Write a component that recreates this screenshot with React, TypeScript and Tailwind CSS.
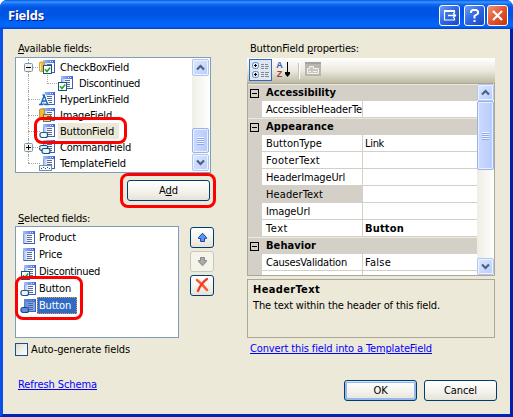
import React, { useLayoutEffect, useRef, useState } from "react";

/** Text whose tracking is adjusted so that it takes exactly `w` pixels. */
function Label({ w, children, className = "" }: { w: number; children: React.ReactNode; className?: string }) {
  const ref = useRef<HTMLSpanElement>(null);
  const [spacing, setSpacing] = useState(0);
  useLayoutEffect(() => {
    const el = ref.current;
    if (!el) return;
    const count = (el.textContent || "").length;
    el.style.letterSpacing = "0px";
    const next = (w - el.getBoundingClientRect().width) / count;
    el.style.letterSpacing = `${next}px`;
    setSpacing(next);
  }, [w]);
  return (
    <span ref={ref} className={`inline-block shrink-0 whitespace-pre ${className}`} style={{ letterSpacing: spacing }}>
      {children}
    </span>
  );
}

type Badge = "none" | "check" | "link" | "image" | "button" | "command" | "template" | "dbcheck";

/** White box with a green tick, as wide as 8 pixels. */
function Tick({ x, y }: { x: number; y: number }) {
  return (
    <g transform={`translate(${x} ${y})`}>
      <rect x=".5" y=".5" width="8" height="8" fill="#fff" stroke="#1c5180" />
      <path d="M2 4.200l2 2.300 3.200-4" fill="none" stroke="#21a121" strokeWidth="1.500" />
    </g>
  );
}

function FieldIcon({ badge = "none", selected = false }: { badge?: Badge; selected?: boolean }) {
  return (
    <svg width="16" height="16" viewBox="0 0 16 16" className="shrink-0">
      <defs>
        <linearGradient id="page" x1="0" y1="0" x2="1" y2="0">
          <stop offset="0" stopColor="#a9c0f5" />
          <stop offset=".4" stopColor="#f4f7ff" />
          <stop offset="1" stopColor="#ffffff" />
        </linearGradient>
        <linearGradient id="bar" x1="0" y1="0" x2="1" y2="0">
          <stop offset="0" stopColor="#a9c1fb" />
          <stop offset="1" stopColor="#3c62d8" />
        </linearGradient>
      </defs>
      <rect x="4" y="1" width="12" height="13" fill="#7f9be2" />
      <rect x="5" y="4" width="10" height="9" fill="url(#page)" />
      <rect x="4" y="1" width="12" height="3" fill="url(#bar)" />
      <path d="M15.500 2v12M5 13.500h11" stroke="#3f5fb8" fill="none" />
      <path d="M11 2.500h1M13 2.500h1" stroke="#dfe8ff" />
      <path d="M8 5.500h5M8 7.500h5M8 9.500h5M8 11.500h5" stroke="#5d6c95" />
      {badge === "dbcheck" && (
        <g>
          <path d="M.5 3.500q2.500-1.500 5 0v8.500q-2.500 1.500-5 0z" fill="#f0bb2f" stroke="#b8861a" strokeWidth=".6" />
          <path d="M1.500 4.500v7" stroke="#ffe9a0" />
          <Tick x={4} y={6} />
        </g>
      )}
      {badge === "check" && <Tick x={1} y={7} />}
      {badge === "link" && (
        <g fill="none">
          <path d="M2 13L5 4L9 13M3.500 10h4" stroke="#fff" strokeWidth="3" />
          <path d="M2 13L5.200 4.500L8.500 13M3.500 10h4M0 13.500h4M6 13.500h4M3.500 4h2" stroke="#1769bd" strokeWidth="1.400" />
        </g>
      )}
      {badge === "image" && (
        <g>
          <path d="M.5 2.500q3-2 5 0v8h-5z" fill="#f0bb2f" stroke="#9f7926" strokeWidth=".7" />
          <rect x="4.500" y="7.500" width="7" height="7" fill="#d9cf92" stroke="#77703d" />
          <path d="M6 10h2v3H6z" fill="#b7402a" />
          <path d="M8 9h3v4H8z" fill="#387f45" />
        </g>
      )}
      {badge === "button" && (
        <rect x="1" y="9.500" width="7.500" height="5" rx="2" fill={selected ? "#668ed2" : "#eff5fa"} stroke={selected ? "#1f468c" : "#24537e"} strokeWidth="1.200" />
      )}
      {badge === "command" && (
        <g fill="#e4f2fa" stroke="#174d78" strokeWidth="1.200">
          <rect x=".6" y="6.500" width="8" height="5" rx="2" />
          <rect x="3" y="9.500" width="8" height="5" rx="2" />
        </g>
      )}
      {badge === "template" && (
        <g>
          <rect x=".5" y="10.500" width="12" height="5" fill="#f4f8fc" stroke="#7591aa" />
          <path d="M2 13.500h1M4 12.500h1M6 13.500h1M8 12.500h1M10 13.500h1" stroke="#35536e" />
        </g>
      )}
      {selected && <path d="M4 1h12v13H8.500V9H4z" fill="#316ac5" opacity=".6" />}
    </svg>
  );
}

function Chevron({ up = false }: { up?: boolean }) {
  return (
    <div className="flex h-[17px] w-full shrink-0 items-center justify-center rounded-[2px] border border-[#b3c6f1] bg-linear-to-br from-[#dce7ff] to-[#b9cdfb] shadow-[inset_0_0_0_1px_#edf3ff]">
      <svg width="9" height="7" viewBox="0 0 9 7">
        <path d={up ? "M1 5.500L4.500 2L8 5.500" : "M1 1.500L4.500 5L8 1.500"} fill="none" stroke="#4d6185" strokeWidth="2.200" />
      </svg>
    </div>
  );
}

function Thumb({ className }: { className: string }) {
  return (
    <div className={`flex w-full shrink-0 flex-col items-center justify-center gap-px rounded-[2px] border border-[#98b2eb] bg-linear-to-r from-[#cbdaff] to-[#b8cbfa] shadow-[inset_0_0_0_1px_#e8efff] ${className}`}>
      {[0, 1, 2, 3].map((i) => (
        <span key={i} className="h-px w-[7px] bg-[#eef4ff] shadow-[0_1px_0_#8caaf0]" />
      ))}
    </div>
  );
}

function Expander({ open }: { open: boolean }) {
  return (
    <svg width="9" height="9" className="relative shrink-0">
      <rect x=".5" y=".5" width="8" height="8" rx="1" fill="#f3f1e9" stroke="#7898b5" />
      <path d={open ? "M2 4.500h5" : "M2 4.500h5M4.500 2v5"} stroke="#000" />
    </svg>
  );
}

const tree: { text: string; w: number; badge: Badge; child?: boolean; box?: "open" | "closed"; hot?: boolean }[] = [
  { text: "CheckBoxField", w: 69, badge: "dbcheck", box: "open" },
  { text: "Discontinued", w: 61, badge: "check", child: true },
  { text: "HyperLinkField", w: 69, badge: "link" },
  { text: "ImageField", w: 52, badge: "image" },
  { text: "ButtonField", w: 54, badge: "button", hot: true },
  { text: "CommandField", w: 71, badge: "command", box: "closed" },
  { text: "TemplateField", w: 66, badge: "template" },
];

function TreeRow({ item, last }: { item: (typeof tree)[number]; last: boolean }) {
  return (
    <div className="flex h-4 items-center">
      <div className="relative flex h-4 w-[22px] items-center pl-[7px]">
        <span className={`absolute left-[11px] top-0 border-l border-dotted border-[#a9a799] ${last ? "h-2" : "h-4"}`} />
        {!item.child && <span className="absolute left-[11px] top-2 w-3 border-t border-dotted border-[#a9a799]" />}
        {item.box && <Expander open={item.box === "open"} />}
      </div>
      {item.child && (
        <div className="flex h-4 w-[18px] pl-2">
          <span className="h-[9px] w-[10px] border-b border-l border-dotted border-[#a9a799]" />
        </div>
      )}
      <FieldIcon badge={item.badge} />
      <div className={`flex h-4 items-center ${item.child ? "ml-[3px] pl-[3px]" : "ml-[3px] pl-[2px]"} ${item.hot ? "w-[61px] bg-[#ece9d8]" : ""}`}>
        <Label w={item.w} className="pt-px">{item.text}</Label>
      </div>
    </div>
  );
}

const selectedFields: { text: string; w: number; badge: Badge; sel?: boolean }[] = [
  { text: "Product", w: 37, badge: "none" },
  { text: "Price", w: 23, badge: "none" },
  { text: "Discontinued", w: 61, badge: "check" },
  { text: "Button", w: 32, badge: "button" },
  { text: "Button", w: 32, badge: "button", sel: true },
];

function PushButton({ children, focus = false, disabled = false, className }: { children: React.ReactNode; focus?: boolean; disabled?: boolean; className: string }) {
  return (
    <button
      className={`flex shrink-0 items-center justify-center rounded-[3px] border ${disabled ? "border-[#c9c7ba] bg-[#f5f4ea]" : "border-[#003c74] bg-linear-to-b from-white via-[#f5f4ee] to-[#e5e2d8]"} ${focus ? "shadow-[inset_0_1px_0_#cee7ff,inset_0_0_0_2px_#9ab7ec,inset_0_-2px_0_#7597df]" : ""} ${className}`}
    >
      {children}
    </button>
  );
}

const props: { name: string; nw: number; value?: string; vw?: number; kind?: "cat" | "active"; bold?: boolean }[] = [
  { name: "Accessibility", nw: 70, kind: "cat" },
  { name: "AccessibleHeaderTe", nw: 96 },
  { name: "Appearance", nw: 68, kind: "cat" },
  { name: "ButtonType", nw: 56, value: "Link", vw: 19 },
  { name: "FooterText", nw: 54 },
  { name: "HeaderImageUrl", nw: 79 },
  { name: "HeaderText", nw: 57, kind: "active" },
  { name: "ImageUrl", nw: 44 },
  { name: "Text", nw: 22, value: "Button", vw: 39, bold: true },
  { name: "Behavior", nw: 50, kind: "cat" },
  { name: "CausesValidation", nw: 81, value: "False", vw: 26 },
];

function PropRow({ row }: { row: (typeof props)[number] }) {
  if (row.kind === "cat") {
    return (
      <div className="flex h-[17px] shrink-0 items-center border-t border-[#ece9d8] bg-[#d4d0c8] pl-[2px]">
        <svg width="9" height="9" className="shrink-0">
          <rect x=".5" y=".5" width="8" height="8" fill="none" stroke="#000" />
          <path d="M2 4.500h5" stroke="#000" />
        </svg>
        <Label w={row.nw} className="ml-[7px] font-bold">{row.name}</Label>
      </div>
    );
  }
  return (
    <div className="flex h-[17px] shrink-0 pl-[14px]">
      <div className={`flex w-[100px] items-center overflow-hidden border-b border-[#d4d0c8] pl-1 pt-px ${row.kind === "active" ? "bg-[#d4d0c8]" : "bg-white"}`}>
        <Label w={row.nw}>{row.name}</Label>
      </div>
      <div className="flex flex-1 items-center border-b border-l border-[#d4d0c8] bg-white pl-[2px] pt-px">
        {row.value && <Label w={row.vw || 20} className={row.bold ? "font-bold" : ""}>{row.value}</Label>}
      </div>
    </div>
  );
}

function TitleButton({ children, red = false, className = "" }: { children: React.ReactNode; red?: boolean; className?: string }) {
  return (
    <div className={`h-[21px] w-[21px] rounded-[3px] border border-white ${red ? "bg-linear-to-br from-[#ee9374] via-[#e2542c] to-[#c43709]" : "bg-linear-to-br from-[#6e9cf5] via-[#2f65e3] to-[#1747c8]"} ${className}`}>
      <svg width="19" height="19" viewBox="0 0 19 19" fill="none" stroke="#fff" strokeWidth="2">{children}</svg>
    </div>
  );
}

export default function App() {
  return (
    <div className="relative flex h-[417px] w-[513px] flex-col overflow-hidden rounded-t-[7px] bg-[#0a4be0] font-['DejaVu_Sans_Condensed','DejaVu_Sans',sans-serif] text-[11px] leading-4 text-black">
      <header className="flex h-[29px] shrink-0 bg-[linear-gradient(180deg,#0058e6_0%,#3a93ff_7%,#0e66ee_16%,#0054e3_28%,#0055e5_55%,#0266fa_82%,#0362f4_92%,#003fc5_100%)] pl-2 pr-[5px] pt-[5px]">
        <Label w={36} className="mt-[2px] font-['Open_Sans',sans-serif] text-[13px] font-bold text-white [text-shadow:1px_1px_0_#0a1883]">Fields</Label>
        <TitleButton className="ml-auto">
          <path d="M14.500 7V5M4.500 4v10.500M4 14h11M14.500 14.500V12" strokeWidth="1.200" />
          <path d="M4 5h11" />
          <path d="M8 9.500h8M13 7l2.500 2.500-2.500 2.500" strokeWidth="1.300" />
        </TitleButton>
        <TitleButton className="ml-1">
          <path d="M6 7V5.500L7.500 4h4L13 5.500v2L9.500 10v2.500M9.500 14v2" />
        </TitleButton>
        <TitleButton red className="ml-[2px]"><path d="M5 5l9 9M14 5l-9 9" strokeWidth="2.200" /></TitleButton>
      </header>

      <div className="flex h-[388px] border-b-[3px] border-l-[3px] border-r-[3px] border-b-[#0026b5] border-l-[#0a50e8] border-r-[#0020b0] bg-[#ece9d8]">
        <section className="ml-3 flex w-[201px] shrink-0 flex-col">
          <Label w={74} className="ml-[3px] mt-3 self-start"><u>A</u>vailable fields:</Label>
          <div className="flex h-[116px] w-[196px] shrink-0 border border-[#7f9db9] bg-white p-px">
            <div className="flex-1">
              {tree.map((item, i) => <TreeRow key={item.text} item={item} last={i === tree.length - 1} />)}
            </div>
            <div className="flex w-[17px] flex-col bg-linear-to-r from-[#f0efe8] to-[#fefefb]">
              <Chevron up />
              <Thumb className="mt-[52px] h-[25px]" />
              <div className="mt-px flex"><Chevron /></div>
            </div>
          </div>
          <PushButton className="ml-28 mt-[7px] h-[21px] w-[83px]"><Label w={19} className="pt-px">A<u>d</u>d</Label></PushButton>
          <Label w={72} className="ml-[3px] mt-[9px] self-start pt-px"><u>S</u>elected fields:</Label>
          <div className="-mt-px flex shrink-0">
            <div className="h-[112px] w-[164px] shrink-0 border border-[#7f9db9] bg-white pl-1 pt-[2px]">
              {selectedFields.map((f, i) => (
                <div key={i} className="flex h-[17px] items-center">
                  <div className={`flex w-[17px] ${f.badge === "none" ? "-ml-px mr-px" : ""}`}><FieldIcon badge={f.badge} selected={f.sel} /></div>
                  <div className={`flex h-[17px] items-center ${f.sel ? "w-10 border border-dotted border-[#e69b4a] bg-[#316ac5] pl-px text-white" : "pl-[2px]"}`}>
                    <Label w={f.w}>{f.text}</Label>
                  </div>
                </div>
              ))}
            </div>
            <div className="ml-[11px] flex flex-col gap-[3px] pt-px">
              <PushButton className="h-[21px] w-6">
                <svg width="11" height="11"><path d="M5.500 1.200L9.500 5.500V6.500H7.500V9.500H3.500V6.500H1.500V5.500z" fill="#5b93f5" stroke="#1d46a8" /></svg>
              </PushButton>
              <PushButton disabled className="h-[21px] w-6">
                <svg width="11" height="11"><path d="M5.500 9.800L9.500 5.500V4.500H7.500V1.500H3.500V4.500H1.500V5.500z" fill="#aaa" stroke="#888" /></svg>
              </PushButton>
              <PushButton className="h-[21px] w-6">
                <svg width="15" height="15" fill="none" strokeLinecap="round"><path d="M2 2q5 4 10 10" stroke="#fb5838" strokeWidth="2.500" /><path d="M12 1Q6 5 3 13" stroke="#f13a20" strokeWidth="2.200" /></svg>
              </PushButton>
            </div>
          </div>
          <div className="mt-[5px] flex h-[13px] items-center">
            <span className="h-[13px] w-[13px] border border-[#1c5180] bg-linear-to-br from-[#dcdcd7] to-white" />
            <Label w={99} className="ml-[3px]">Auto-generate fields</Label>
          </div>
          <Label w={79} className="ml-[3px] mt-5 self-start pt-px text-[#0000ff] underline">Refresh Schema</Label>
        </section>

        <section className="ml-[31px] flex w-[251px] shrink-0 flex-col">
          <Label w={109} className="ml-[3px] mt-3 self-start">ButtonField <u>p</u>roperties:</Label>
          <div className="mt-px flex h-[25px] w-[248px] shrink-0 bg-[linear-gradient(180deg,#ffffff,#ece9df_50%,#bdbba2)] pl-[2px] pt-px">
            <div className="h-[22px] w-[23px] border border-[#316ac5] bg-[#e2e6ee]">
              <svg width="21" height="20">
                <g fill="#d7eafa" stroke="#648fbd"><rect x="2.500" y="2.500" width="6" height="6" rx="2" /><rect x="2.500" y="11.500" width="6" height="6" rx="2" /></g>
                <path d="M4 5.500h3M5.500 4v3M4 14.500h3M5.500 13v3" stroke="#000" />
                <path d="M11 4.500h3M15 4.500h3M11 6.500h3M15 6.500h4M11 8.500h3M15 8.500h3M11 12.500h3M15 12.500h4M11 14.500h3M15 14.500h3M11 16.500h3M15 16.500h4" stroke="#7c899b" />
              </svg>
            </div>
            <div className="ml-[3px] flex h-[22px]">
              <div className="flex w-[9px] flex-col items-center pt-[2px] font-['Liberation_Sans',sans-serif] text-[9px] font-bold leading-[9px]">
                <span className="text-[#3159b4]">A</span><span className="text-[#a63c39]">Z</span>
              </div>
              <svg width="7" height="20"><path d="M3.500 3v12" stroke="#000" /><path d="M1 13h5v2l-2.500 3L1 15z" /></svg>
            </div>
            <span className="ml-[7px] mt-1 h-4 w-[2px] border-l border-[#c5c2b8] bg-white" />
            <svg width="17" height="20" className="ml-1">
              <path d="M1 3h16v14H1z" fill="#b8b6ac" /><path d="M1 3h16v2H1z" fill="#a4a29a" />
              <path d="M3.500 14.500v-5h2v-2h4v2h5v5z" fill="#c9c7bd" stroke="#f4f3ee" />
              <path d="M5 12.500h2M9 12.500h4" stroke="#f4f3ee" />
            </svg>
          </div>
          <div className="flex h-[193px] w-[248px] shrink-0 overflow-hidden border border-[#aca899] bg-[#d4d0c8]">
            <div className="flex h-[191px] w-[229px] flex-col overflow-hidden">
              {props.map((p) => <PropRow key={p.name} row={p} />)}
              <div className="flex pl-[14px]"><div className="h-4 w-[100px] bg-white" /><div className="h-4 flex-1 border-l border-[#d4d0c8] bg-white" /></div>
            </div>
            <div className="flex w-[17px] flex-col bg-linear-to-r from-[#eeede5] to-[#fefefb]">
              <Chevron up />
              <Thumb className="h-[69px]" />
              <div className="mt-auto flex"><Chevron /></div>
            </div>
          </div>
          <div className="mt-[3px] flex h-[59px] w-[248px] shrink-0 flex-col items-start border border-[#aca899] pl-[5px] pt-[2px]">
            <Label w={67} className="font-bold">HeaderText</Label>
            <Label w={187}>The text within the header of this field.</Label>
          </div>
          <Label w={182} className="ml-[3px] mt-[3px] self-start text-[#0000ff] underline">Convert this field into a TemplateField</Label>
          <div className="mt-[23px] flex gap-[7px] pl-[97px]">
            <PushButton focus className="h-[21px] w-[73px]"><Label w={14} className="pt-px">OK</Label></PushButton>
            <PushButton className="h-[21px] w-[73px]"><Label w={33} className="pt-px">Cancel</Label></PushButton>
          </div>
        </section>
      </div>

      <span className="absolute left-[34px] top-[117px] h-[27px] w-[93px] rounded-[8px] border-[3px] border-[#f00]" />
      <span className="absolute left-[120px] top-[173px] h-[35px] w-[96px] rounded-[8px] border-[3px] border-[#f00]" />
      <span className="absolute left-[15px] top-[276px] h-[44px] w-[68px] rounded-[8px] border-[3px] border-[#f00]" />
    </div>
  );
}
